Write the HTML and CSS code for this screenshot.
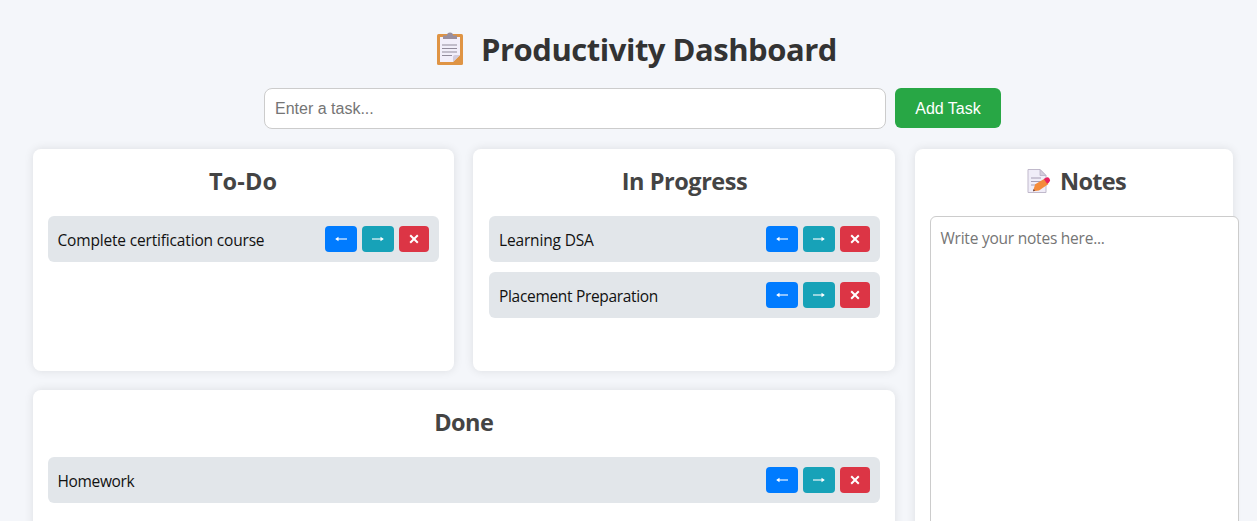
FILE: index.html
```html
<!DOCTYPE html>
<html lang="en">
<head>
<meta charset="utf-8">
<title>Productivity Dashboard</title>
<link rel="stylesheet" href="styles.css">
</head>
<body>
<svg width="0" height="0" class="defs">
  <symbol id="left" viewBox="0 0 12 8"><path d="M12 4H1.500" fill="none" stroke="#fff" stroke-width="1.100"/><path d="M.2 4l3.300-2.300v4.600z" fill="#fff"/></symbol>
  <symbol id="right" viewBox="0 0 12 8"><path d="M0 4h10.500" fill="none" stroke="#fff" stroke-width="1.100"/><path d="M11.800 4L8.500 1.700v4.600z" fill="#fff"/></symbol>
  <symbol id="cross" viewBox="0 0 10 10"><path d="M1.200 1.200l7.600 7.600M8.800 1.200L1.200 8.800" fill="none" stroke="#fff" stroke-width="2"/></symbol>
</svg>
<header class="header">
  <h1 class="title">
    <svg class="clipboard" viewBox="0 0 28 34">
      <rect x="1" y="2" width="26" height="31" rx="1.500" fill="#df9444"/>
      <path d="M4 5h20v18l-7 7H4z" fill="#f2effa"/>
      <path d="M24 23l-7 7v-5q0-2 2-2z" fill="#d2cbdc"/>
      <path d="M7 7V3.500h4a3 3 0 0 1 6 0h4V7z" fill="#998f9e"/>
      <path d="M6 13h15M6 16.500h15M6 20h15M6 23.500h10" stroke="#918b9b" stroke-width="1"/>
    </svg>
    <span class="title-text">Productivity Dashboard</span>
  </h1>
  <div class="task-form">
    <input class="task-input" type="text" placeholder="Enter a task...">
    <button class="add">Add Task</button>
  </div>
</header>
<main class="layout">
  <div class="board">
    <section class="card">
      <h2 class="heading"><span class="h-todo">To-Do</span></h2>
      <div class="task"><span class="t-course">Complete certification course</span><div class="actions"><button class="btn back"><svg class="arrow"><use href="#left"/></svg></button><button class="btn next"><svg class="arrow"><use href="#right"/></svg></button><button class="btn remove"><svg class="x"><use href="#cross"/></svg></button></div></div>
    </section>
    <section class="card">
      <h2 class="heading"><span class="h-progress">In Progress</span></h2>
      <div class="task"><span class="t-dsa">Learning DSA</span><div class="actions"><button class="btn back"><svg class="arrow"><use href="#left"/></svg></button><button class="btn next"><svg class="arrow"><use href="#right"/></svg></button><button class="btn remove"><svg class="x"><use href="#cross"/></svg></button></div></div>
      <div class="task"><span class="t-placement">Placement Preparation</span><div class="actions"><button class="btn back"><svg class="arrow"><use href="#left"/></svg></button><button class="btn next"><svg class="arrow"><use href="#right"/></svg></button><button class="btn remove"><svg class="x"><use href="#cross"/></svg></button></div></div>
    </section>
    <section class="card done">
      <h2 class="heading"><span class="h-done">Done</span></h2>
      <div class="task"><span class="t-home">Homework</span><div class="actions"><button class="btn back"><svg class="arrow"><use href="#left"/></svg></button><button class="btn next"><svg class="arrow"><use href="#right"/></svg></button><button class="btn remove"><svg class="x"><use href="#cross"/></svg></button></div></div>
    </section>
  </div>
  <aside class="card notes">
    <h2 class="heading notes-heading">
      <svg class="memo" viewBox="0 0 24 24">
        <path d="M1 .5h12l6 6v17H1z" fill="#f0edf8" stroke="#c0b9cb" stroke-width="1"/>
        <path d="M13 .5v6h6z" fill="#d4cddd" stroke="#b8b0c5" stroke-width=".8"/>
        <path d="M4 9h10M4 12.500h10M4 16h5" stroke="#a59db3" stroke-width="1.200"/>
        <path d="M6 22.300l2.200-7 9.300-5.600 4 5.300-9.500 6.400z" fill="#f48b3a"/>
        <path d="M6 22.300l.7-2.300 1.400 1.700z" fill="#5a3d48"/>
        <path d="M16.800 10.100l2-1.400q2.200-1 3.800 1 1.300 2.200-.5 3.600l-2 1.500z" fill="#e9225f"/>
      </svg>
      <span class="h-notes">Notes</span>
    </h2>
    <textarea class="notes-area" placeholder="Write your notes here..."></textarea>
  </aside>
</main>
</body>
</html>
```
FILE: styles.css
```css
html { overflow: hidden; }
body {
  margin: 0;
  height: 521px;
  overflow: hidden;
  background: #f4f6fa;
  font-family: "Open Sans", "Noto Sans", sans-serif;
  font-size: 15.500px;
  color: #111;
}
.defs { position: absolute; }
.header { height: 148px; }
.title {
  display: flex;
  align-items: center;
  margin: 0;
  padding: 27px 0 0 436px;
  height: 44px;
  font-size: 31px;
  line-height: 44px;
  color: #333;
  white-space: nowrap;
}
.title-text { letter-spacing: -.48px; }
.clipboard { width: 28px; height: 34px; margin-right: 17px; }
.task-form { display: flex; gap: 9px; margin: 17px 0 0 264px; }
.task-input {
  box-sizing: border-box;
  width: 622px;
  height: 41px;
  padding: 0 10px;
  border: 1px solid #ccc;
  border-radius: 8px;
  font: 16px "Liberation Sans", Arial, sans-serif;
}
.task-input::placeholder, .notes-area::placeholder { color: #757575; opacity: 1; }
.notes-area::placeholder { letter-spacing: -.23px; }
.add {
  width: 106px;
  height: 40px;
  padding: 2px 0 0;
  border: 0;
  border-radius: 6px;
  background: #28a745;
  color: #fff;
  font: 16px "Liberation Sans", Arial, sans-serif;
}
.layout {
  display: grid;
  grid-template-columns: 862.500px 318px;
  gap: 19.500px;
  padding: .5px 0 0 32.500px;
}
.board {
  display: grid;
  grid-template-columns: 421px 422px;
  grid-template-rows: 222px 222px;
  gap: 19.500px;
}
.card {
  box-sizing: border-box;
  padding: 15px;
  border-radius: 8px;
  background: #fff;
  box-shadow: 0 0 10px rgba(0, 0, 0, .1);
}
.board .card:nth-child(2) { padding-left: 16px; }
.done { grid-column: 1 / 3; }
.heading {
  display: flex;
  justify-content: center;
  align-items: center;
  height: 32px;
  margin: 1px 0 19.500px;
  font-size: 23.500px;
  line-height: 32px;
  color: #444;
  white-space: nowrap;
}
.done .heading { margin-bottom: 19px; }
.notes-heading { padding-left: 6px; }
.h-todo { letter-spacing: .1px; }
.h-progress { letter-spacing: -.45px; }
.h-done { letter-spacing: -.6px; }
.h-notes { letter-spacing: -.7px; }
.t-course { letter-spacing: -.17px; }
.t-dsa { letter-spacing: -.16px; }
.t-placement { letter-spacing: -.32px; }
.t-home { letter-spacing: -.35px; }
.task {
  display: flex;
  align-items: center;
  justify-content: space-between;
  box-sizing: border-box;
  height: 46px;
  margin-bottom: 10px;
  padding: 0 10px;
  border-radius: 6px;
  background: #e2e6ea;
  white-space: nowrap;
}
.task > span { padding-top: 1px; }
.actions { display: flex; gap: 5px; margin-top: -1px; }
.btn {
  display: flex;
  align-items: center;
  justify-content: center;
  width: 32px;
  height: 26px;
  padding: 0;
  border: 0;
  border-radius: 4px;
}
.back { background: #007bff; }
.next { background: #17a2b8; }
.remove { width: 30px; background: #dc3545; }
.arrow { width: 12px; height: 8px; margin-top: 1px; }
.x { width: 10px; height: 10px; }
.notes { height: 464px; }
.memo { width: 24px; height: 24px; margin-right: 9px; }
.notes-area {
  display: block;
  box-sizing: border-box;
  width: 309px;
  height: 400px;
  padding: 10px;
  border: 1px solid #ccc;
  border-radius: 6px;
  resize: none;
  font: 15.500px/22px "Open Sans", "Noto Sans", sans-serif;
}
```
